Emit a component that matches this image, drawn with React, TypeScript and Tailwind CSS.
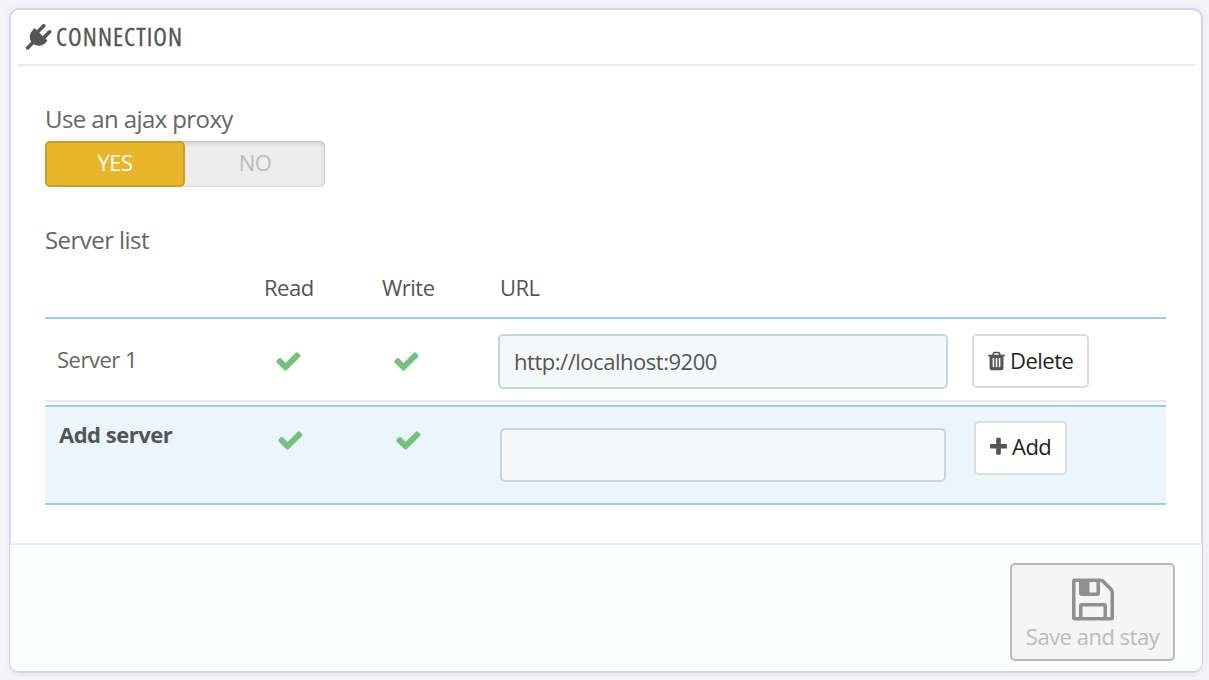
import type { ReactNode } from "react";

const paths = {
  plug: "M1755 453q37 38 37 90.5t-37 90.5l-401 400 150 150-160 160q-163 163-389.5 186.5t-411.5-100.5l-362 362h-181v-181l362-362q-124-185-100.5-411.5t186.5-389.5l160-160 150 150 400-401q38-37 91-37t90 37 37 90.5-37 90.5l-400 401 234 234 401-400q38-37 91-37t90 37z",
  check: "M1671 566q0 40-28 68l-724 724-136 136q-28 28-68 28t-68-28l-136-136-362-362q-28-28-28-68t28-68l136-136q28-28 68-28t68 28l294 295 656-657q28-28 68-28t68 28l136 136q28 28 28 68z",
  plus: "M1600 736v192q0 40-28 68t-68 28h-416v416q0 40-28 68t-68 28h-192q-40 0-68-28t-28-68v-416h-416q-40 0-68-28t-28-68v-192q0-40 28-68t68-28h416v-416q0-40 28-68t68-28h192q40 0 68 28t28 68v416h416q40 0 68 28t28 68z",
  trash: "M704 1376v-704q0-14-9-23t-23-9h-64q-14 0-23 9t-9 23v704q0 14 9 23t23 9h64q14 0 23-9t9-23zm256 0v-704q0-14-9-23t-23-9h-64q-14 0-23 9t-9 23v704q0 14 9 23t23 9h64q14 0 23-9t9-23zm256 0v-704q0-14-9-23t-23-9h-64q-14 0-23 9t-9 23v704q0 14 9 23t23 9h64q14 0 23-9t9-23zm-544-992h448l-48-117q-7-9-17-11h-317q-10 2-17 11zm928 32v64q0 14-9 23t-23 9h-96v948q0 83-47 143.5t-113 60.5h-832q-66 0-113-58.5t-47-141.5v-952h-96q-14 0-23-9t-9-23v-64q0-14 9-23t23-9h309l70-167q15-37 54-63t79-26h320q40 0 79 26t54 63l70 167h309q14 0 23 9t9 23z",
  floppy: "M512 1536h768v-384h-768v384zm896 0h128v-896q0-14-10-38.5t-20-34.5l-281-281q-10-10-34-20t-39-10v416q0 40-28 68t-68 28h-576q-40 0-68-28t-28-68v-416h-128v1280h128v-416q0-40 28-68t68-28h832q40 0 68 28t28 68v416zm-384-928v-320q0-13-9.5-22.5t-22.5-9.5h-192q-13 0-22.5 9.5t-9.5 22.5v320q0 13 9.5 22.5t22.5 9.5h192q13 0 22.5-9.5t9.5-22.5zm640 32v928q0 40-28 68t-68 28h-1344q-40 0-68-28t-28-68v-1344q0-40 28-68t68-28h928q40 0 88 20t76 48l280 280q28 28 48 76t20 88z",
};

function Icon({ name, box = "0 0 1792 1792", className }: { name: keyof typeof paths; box?: string; className: string }) {
  return (
    <svg viewBox={box} fill="currentColor" className={`shrink-0 ${className}`} aria-hidden="true">
      <path d={paths[name]} />
    </svg>
  );
}

function Button({ children }: { children: ReactNode }) {
  return (
    <button className="flex h-[54px] items-center rounded-[5px] border-2 border-[#dddddd] bg-white px-[14px] text-[22px] tracking-[-0.5px] text-[#1e1e1e]">
      {children}
    </button>
  );
}

export default function App() {
  return (
    <div className="h-[680px] w-[1209px] overflow-hidden bg-[#f4f3f9] pt-2 pl-[9px] font-['Open_Sans','Noto_Sans',sans-serif] text-[22px] tracking-[-0.5px] text-[#666666]">
      <section className="flex h-[665px] w-[1194px] flex-col rounded-[10px] border-2 border-[#d3d4e8] bg-white shadow-[0_4px_0_rgba(0,0,0,0.02),0_0_0_4px_rgba(0,0,0,0.01)]">
        <header className="mx-[6px] flex h-[56px] items-center border-b-2 border-[#eaeced] pl-[9px] text-[#555555]">
          <Icon name="plug" className="mr-[0.5px] size-[25.5px]" />
          <h2 className="mb-[2px] ml-[4px] text-[25px] leading-[34px] font-medium tracking-[1.06px] [-webkit-text-stroke:0.3px_#555555] [font-stretch:75%]">CONNECTION</h2>
        </header>
        <main className="flex-1 px-[34px] pt-[35px]">
          <p className="text-[24px] leading-[36px] tracking-[-0.6px]">Use an ajax proxy</p>
          <div className="mt-[4px] mb-[35px] flex h-[46px] w-[280px] rounded-[5px] bg-[#ededed] text-center leading-[42px] shadow-[inset_0_2px_5px_rgba(0,0,0,0.15),inset_0_0_2px_rgba(0,0,0,0.15)]">
            <span className="w-[140px] rounded-[5px] border-2 border-[#cf9f1f] bg-[#e9b52b] leading-[39px] text-white">YES</span>
            <span className="w-[140px] text-[#bbbbbb]">NO</span>
          </div>
          <p className="text-[24px] leading-[36px] tracking-[-0.55px]">Server list</p>
          <div className="grid h-[61px] w-[1121px] grid-cols-[219px_118px_118px_1fr] border-b-2 border-[#99cee8] pt-[11px] leading-[36px] text-[#555555]">
            <span />
            <span>Read</span>
            <span>Write</span>
            <span>URL</span>
          </div>
          <div className="grid h-[83px] w-[1121px] grid-cols-[229px_118px_106px_474px_1fr] border-b-2 border-[#e7eaec] pt-[15px]">
            <span className="pl-[12px] leading-[50px]">Server 1</span>
            <Icon name="check" box="-20 0 1792 1792" className="mt-[13px] size-[28px] text-[#72c27c]" />
            <Icon name="check" box="-20 0 1792 1792" className="mt-[13px] size-[28px] text-[#72c27c]" />
            <input readOnly defaultValue="http://localhost:9200" className="h-[55px] w-[450px] rounded-[5px] border-2 border-[#c7d6db] bg-[#f5f8f9] px-[14px] pb-[2px] tracking-[-0.47px] text-[#555555]" />
            <div className="flex">
              <Button>
                <Icon name="trash" box="192 0 1408 1792" className="h-[22px] w-[17px] text-[#555555]" />
                <span className="mb-[2px] ml-[5px]">Delete</span>
              </Button>
            </div>
          </div>
          <div className="mt-[3px] grid h-[100px] w-[1121px] grid-cols-[231px_118px_106px_474px_1fr] border-y-2 border-[#99cee8] bg-[#eaf6fb] pt-[14px]">
            <span className="pl-[14px] leading-[26px] font-bold text-[#555555]">Add server</span>
            <Icon name="check" box="-20 0 1792 1792" className="mt-[5px] size-[28px] text-[#72c27c]" />
            <Icon name="check" box="-20 0 1792 1792" className="mt-[5px] size-[28px] text-[#72c27c]" />
            <input className="mt-[7px] h-[54px] w-[446px] rounded-[5px] border-2 border-[#c7d6db] bg-[#f5f8f9] px-[14px] text-[#555555]" />
            <div className="flex">
              <Button>
                <Icon name="plus" box="192 0 1408 1792" className="mb-[2px] h-[22px] w-[17px] text-[#555555]" />
                <span className="mb-[4px] ml-[5px]">Add</span>
              </Button>
            </div>
          </div>
        </main>
        <footer className="-mx-px flex h-[128px] justify-end rounded-b-[8px] border-t-2 border-[#eaeced] bg-[#fcfdfe] pt-[18px] pr-[27px]">
          <button disabled className="flex h-[98px] w-[165px] flex-col items-center rounded-[5px] border-2 border-[#bbbbbb] bg-[#f5f5f5] text-[22px] tracking-[-0.5px] text-[#bbbbbb]">
            <Icon name="floppy" box="-18 0 1792 1792" className="mt-[10px] size-[49px] text-[#909090]" />
            <span className="-mt-px leading-[26px]">Save and stay</span>
          </button>
        </footer>
      </section>
    </div>
  );
}
